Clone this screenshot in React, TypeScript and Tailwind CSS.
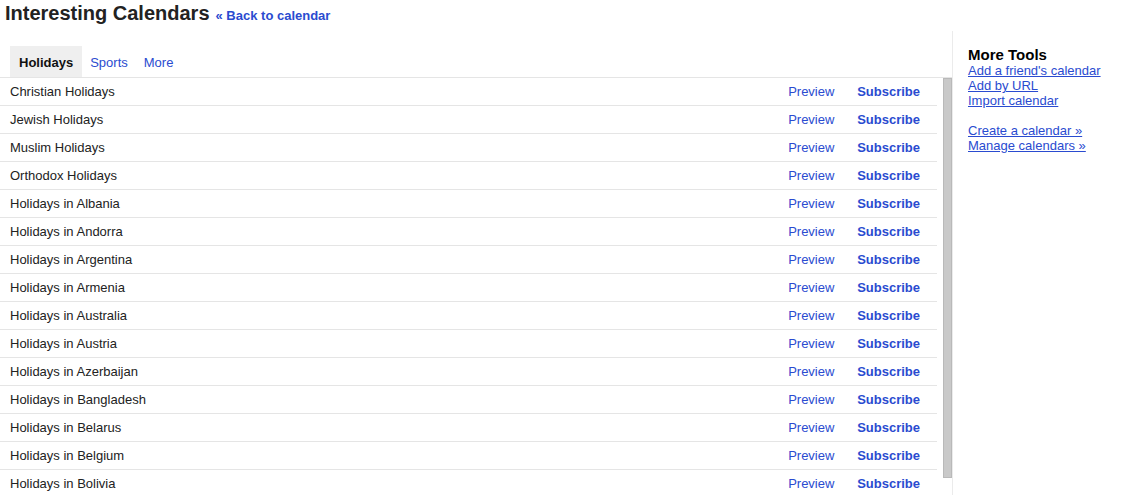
import React from "react";

const holidays = [
  "Christian Holidays",
  "Jewish Holidays",
  "Muslim Holidays",
  "Orthodox Holidays",
  "Holidays in Albania",
  "Holidays in Andorra",
  "Holidays in Argentina",
  "Holidays in Armenia",
  "Holidays in Australia",
  "Holidays in Austria",
  "Holidays in Azerbaijan",
  "Holidays in Bangladesh",
  "Holidays in Belarus",
  "Holidays in Belgium",
  "Holidays in Bolivia",
];

const tools = ["Add a friend's calendar", "Add by URL", "Import calendar"];
const manage = ["Create a calendar »", "Manage calendars »"];

function CalendarRow({ name }: { name: string }) {
  return (
    <div className="flex h-[28px] items-center border-b border-[#e5e5e5] pl-[10px] pr-[17px]">
      <span className="flex-1 text-[13px] text-[#222]">{name}</span>
      <a className="w-[69px] text-[13px] text-[#2a4bd0] cursor-pointer">Preview</a>
      <a className="text-[13px] font-bold text-[#2a4bd0] cursor-pointer">Subscribe</a>
    </div>
  );
}

export default function App() {
  return (
    <div
      className="h-[495px] w-[1138px] overflow-hidden bg-white text-[#222]"
      style={{ fontFamily: '"Liberation Sans", Arial, sans-serif' }}
    >
      {/* header */}
      <div className="flex h-[31px] items-baseline pl-[5px]">
        <h1 className="text-[20px] font-bold leading-[26px] text-[#222]">Interesting Calendars</h1>
        <a className="ml-[6px] text-[13px] font-bold text-[#2a4bd0] cursor-pointer">« Back to calendar</a>
      </div>

      <div className="flex">
        {/* main column */}
        <div className="w-[953px] border-r border-[#ebebeb] pt-[15px]">
          <div className="flex h-[32px] items-stretch border-b border-[#e5e5e5] pl-[10px]">
            <div className="flex items-center bg-[#efefef] px-[9px] pt-[2px] text-[13px] font-bold text-[#111]">
              Holidays
            </div>
            <a className="flex items-center px-[8px] pt-[2px] text-[13px] text-[#2a4bd0] cursor-pointer">Sports</a>
            <a className="flex items-center px-[8px] pt-[2px] text-[13px] text-[#2a4bd0] cursor-pointer">More</a>
          </div>
          <div className="flex">
            <div className="w-[937px]">
              {holidays.map((h) => (
                <CalendarRow key={h} name={h} />
              ))}
            </div>
            <div className="ml-[6px] h-[400px] w-[9px] border border-[#b9b9b9] bg-[#c9c9c9]" />
          </div>
        </div>

        {/* right panel */}
        <div className="pl-[15px] pt-[15px]">
          <div className="text-[15px] font-bold leading-[17px] text-black">More Tools</div>
          <div className="flex flex-col">
            {tools.map((t) => (
              <a key={t} className="text-[13px] leading-[15px] text-[#2a4bd0] underline cursor-pointer">
                {t}
              </a>
            ))}
          </div>
          <div className="mt-[15px] flex flex-col">
            {manage.map((t) => (
              <a key={t} className="text-[13px] leading-[15px] text-[#2a4bd0] underline cursor-pointer">
                {t}
              </a>
            ))}
          </div>
        </div>
      </div>
    </div>
  );
}
